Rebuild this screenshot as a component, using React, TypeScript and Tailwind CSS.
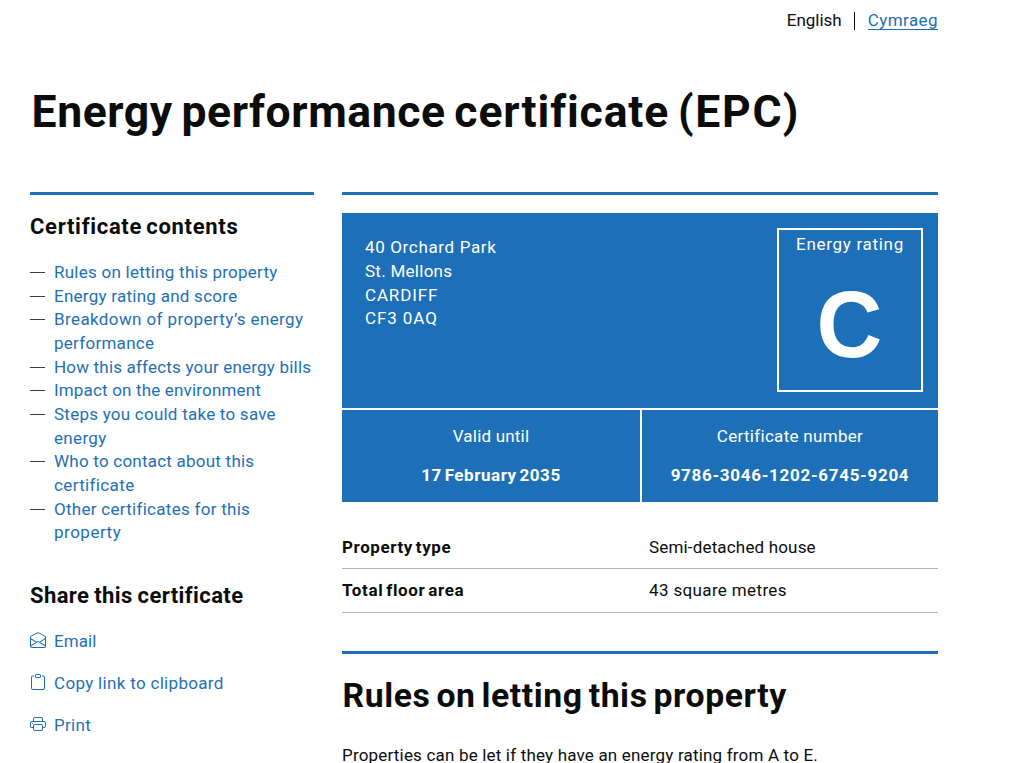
import { BsClipboard, BsEnvelopeOpen, BsPrinter } from "react-icons/bs";

const contents = [
  [{ text: "Rules on letting this property", tracking: "tracking-[0.25px]" }],
  [{ text: "Energy rating and score", tracking: "tracking-[0.26px]" }],
  [
    { text: "Breakdown of property’s energy", tracking: "tracking-[0.39px]" },
    { text: "performance", tracking: "tracking-[0.27px]" },
  ],
  [{ text: "How this affects your energy bills", tracking: "tracking-[0.19px]" }],
  [{ text: "Impact on the environment", tracking: "tracking-[0.17px]" }],
  [
    { text: "Steps you could take to save", tracking: "tracking-[0.24px]" },
    { text: "energy", tracking: "tracking-[0.33px]" },
  ],
  [
    { text: "Who to contact about this", tracking: "tracking-[0.23px]" },
    { text: "certificate", tracking: "tracking-[0.36px]" },
  ],
  [
    { text: "Other certificates for this", tracking: "tracking-[0.28px]" },
    { text: "property", tracking: "tracking-[0.5px]" },
  ],
];

const share = [
  { label: "Email", Icon: BsEnvelopeOpen, tracking: "tracking-[0.1px]" },
  { label: "Copy link to clipboard", Icon: BsClipboard, tracking: "tracking-[0.32px]" },
  { label: "Print", Icon: BsPrinter, tracking: "tracking-[0.3px]" },
];

export default function App() {
  return (
    <div className="h-[763px] w-[1024px] overflow-hidden bg-white pl-[30px] pr-[86px] font-['Roboto',sans-serif] text-[17px] leading-[23.67px] text-[#0b0c0c]">
      <nav className="flex h-[88px] justify-end pt-[9px]">
        <span>English</span>
        <span className="ml-[12px] mr-[13px] mt-[3px] h-[18px] w-px bg-[#0b0c0c]" />
        <a className="h-[21px] border-b border-[#1d70b8] tracking-[0.43px] text-[#1d70b8]">Cymraeg</a>
      </nav>
      <h1 className="h-[104px] whitespace-nowrap pl-[1.5px] text-[44.5px] font-bold leading-[48px] tracking-[0.6px] [word-spacing:-3px]">
        Energy performance <span className="tracking-[0.87px]">certificate </span>
        <span className="tracking-[1.7px]">(EPC)</span>
      </h1>

      <div className="flex gap-[28px]">
        <aside className="w-[284px] border-t-[3px] border-[#1d70b8] pt-[20px]">
          <h2 className="h-[46px] text-[22px] font-bold leading-[24px] tracking-[0.7px] [word-spacing:-2px]">Certificate contents</h2>
          <ul className="h-[323px] whitespace-nowrap">
            {contents.map((lines) => (
              <li key={lines[0].text} className="flex">
                <span className="mt-[11px] h-px w-[15px] bg-[#0b0c0c]/80" />
                <a className="ml-[9px] flex flex-col text-[#1d70b8]">
                  {lines.map(({ text, tracking }) => (
                    <span key={text} className={tracking}>
                      {text}
                    </span>
                  ))}
                </a>
              </li>
            ))}
          </ul>
          <h2 className="h-[45.6px] text-[22px] font-bold leading-[24px] tracking-[0.4px] [word-spacing:-1px]">Share this certificate</h2>
          <ul className="text-[#1d70b8]">
            {share.map(({ label, Icon, tracking }) => (
              <li key={label} className="flex h-[42.4px]">
                <Icon className="mr-[8px] mt-[2px] size-[16px]" />
                <a className={tracking}>{label}</a>
              </li>
            ))}
          </ul>
        </aside>

        <main className="w-[596px] border-t-[3px] border-[#1d70b8] pt-[18px]">
          <section className="text-white">
            <div className="flex h-[195px] justify-between bg-[#1d70b8] pl-[23px] pr-[15px] pt-[15px]">
              <address className="pt-[8.3px] not-italic">
                <p className="tracking-[0.65px]">40 Orchard Park</p>
                <p className="tracking-[0.27px]">St. Mellons</p>
                <p className="tracking-[0.85px]">CARDIFF</p>
                <p className="tracking-[0.9px]">CF3 0AQ</p>
              </address>
              <div className="h-[164px] w-[146px] border-2 border-white pt-[3px] text-center">
                <p className="tracking-[0.7px]">Energy rating</p>
                <p className="mt-[18px] scale-x-[0.97] pr-[1px] font-['Liberation_Sans',sans-serif] text-[94px] font-bold leading-[100px]">C</p>
              </div>
            </div>
            <div className="mt-[2px] grid h-[92px] grid-cols-[298px_296px] gap-[2px] text-center">
              <div className="bg-[#1d70b8] pt-[15px]">
                <p className="tracking-[0.2px]">Valid until</p>
                <p className="mt-[15px] font-bold tracking-[0.55px] [word-spacing:-2px]">17 February 2035</p>
              </div>
              <div className="bg-[#1d70b8] pt-[15px]">
                <p className="tracking-[0.3px]">Certificate number</p>
                <p className="mt-[15px] font-bold tracking-[0.7px]">9786-3046-1202-6745-9204</p>
              </div>
            </div>
          </section>
          <dl className="pt-[24px]">
            <div className="flex h-[43px] border-b border-[#b1b4b6] pt-[10px]">
              <dt className="w-[307px] font-bold tracking-[0.6px] [word-spacing:-2px]">Property type</dt>
              <dd className="tracking-[0.17px]">Semi-detached house</dd>
            </div>
            <div className="flex h-[44px] border-b border-[#b1b4b6] pt-[10px]">
              <dt className="w-[307px] font-bold tracking-[0.65px] [word-spacing:-2px]">Total floor area</dt>
              <dd className="tracking-[0.36px]">43 square metres</dd>
            </div>
          </dl>
          <section className="mt-[38px] border-t-[3px] border-[#1d70b8] pt-[24px]">
            <h2 className="h-[66px] whitespace-nowrap pl-[0.5px] text-[33.75px] font-bold leading-[36px] tracking-[0.58px] [word-spacing:-3px]">Rules on letting this property</h2>
            <p className="tracking-[0.18px]">Properties can be let if they have an energy rating from A to E.</p>
          </section>
        </main>
      </div>
    </div>
  );
}
